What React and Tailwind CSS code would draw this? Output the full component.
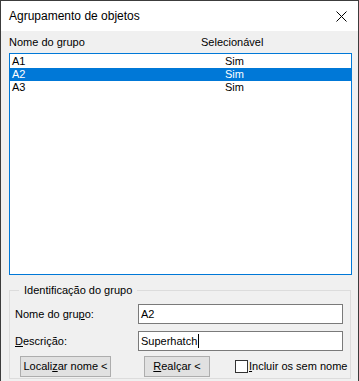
import React from "react";

const rows = [
  { name: "A1", sel: "Sim" },
  { name: "A2", sel: "Sim" },
  { name: "A3", sel: "Sim" },
];

const App = () => {
  const selected = 1;

  return (
    <div
      className="w-[359px] h-[381px] overflow-hidden border-x border-t border-[#3c3c3c] bg-[#f0f0f0] flex flex-col text-[11px] text-black"
      style={{ fontFamily: '"Liberation Sans", Arial, sans-serif' }}
    >
      {/* title bar */}
      <div className="h-[30px] bg-white flex items-center justify-between pl-[8px] pr-[10px]">
        <span className="text-[12px] leading-none">Agrupamento de objetos</span>
        <svg width="11" height="11" viewBox="0 0 11 11" className="mr-[1px]">
          <path d="M0.5 0.5 L10.5 10.5 M10.5 0.5 L0.5 10.5" stroke="#000" strokeWidth="1" fill="none" />
        </svg>
      </div>

      <div className="flex flex-col pl-[8px] pr-[6px]">
        {/* list header */}
        <div className="h-[22px] flex items-center">
          <span className="w-[192px]">
            Nome do <span className="underline">g</span>rupo
          </span>
          <span>Selecionável</span>
        </div>

        {/* list */}
        <div className="h-[222px] border border-[#0078d7] bg-white pt-[1px]">
          {rows.map((r, i) => (
            <div
              key={r.name}
              className={
                "h-[13px] leading-[13px] flex pl-[2px] " +
                (i === selected ? "bg-[#0078d7] text-white" : "")
              }
            >
              <span className="w-[213px]">{r.name}</span>
              <span>{r.sel}</span>
            </div>
          ))}
        </div>

        {/* group box */}
        <fieldset className="mt-[8px] border border-[#dcdcdc] mr-[1px] pl-[5px] pr-[2px] pb-[4px] h-[96px]">
          <legend className="ml-[4px] px-[5px] leading-[14px]">Identificação do grupo</legend>

          <div className="flex items-center mt-[7px] h-[20px]">
            <span className="w-[123px]">
              Nome do gru<span className="underline">p</span>o:
            </span>
            <div className="w-[205px] h-[20px] border border-[#7a7a7a] bg-white flex items-center pl-[2px]">
              A2
            </div>
          </div>

          <div className="flex items-center mt-[7px] h-[20px]">
            <span className="w-[123px]">
              <span className="underline">D</span>escrição:
            </span>
            <div className="w-[205px] h-[20px] border border-[#7a7a7a] bg-white flex items-center pl-[2px]">
              Superhatch
              <span className="w-[1px] h-[14px] bg-black ml-[1px]" />
            </div>
          </div>

          <div className="flex items-center mt-[5px] h-[21px] whitespace-nowrap">
            <button className="ml-[5px] w-[91px] h-[21px] border border-[#adadad] bg-[#e1e1e1]">
              Locali<span className="underline">z</span>ar nome &lt;
            </button>
            <button className="ml-[33px] w-[66px] h-[21px] border border-[#adadad] bg-[#e1e1e1]">
              <span className="underline">R</span>ealçar &lt;
            </button>
            <span className="ml-[25px] w-[13px] h-[13px] shrink-0 border border-[#333] bg-white" />
            <span className="ml-[1px]">
              <span className="underline">I</span>ncluir os sem nome
            </span>
          </div>
        </fieldset>
      </div>
    </div>
  );
};

export default App;
